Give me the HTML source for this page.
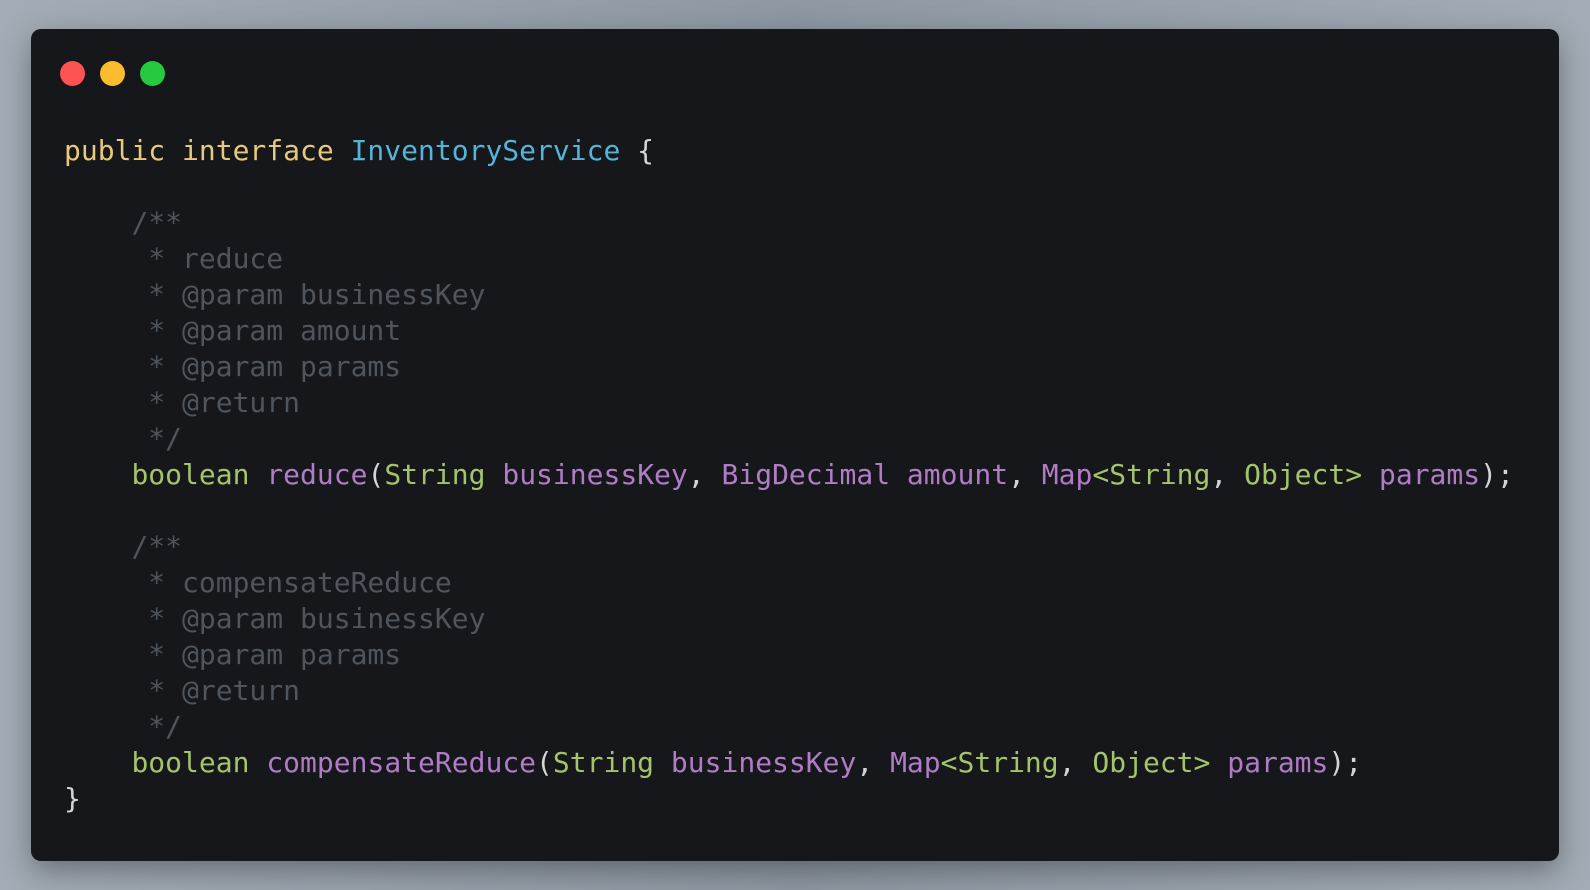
<!DOCTYPE html>
<html><head><meta charset="utf-8"><style>
html,body{margin:0;padding:0;width:1590px;height:890px;overflow:hidden;background:linear-gradient(90deg,#a3acb6,#8e98a2 50%,#a3acb6);}
.win{position:absolute;left:31px;top:29px;width:1528px;height:832px;background:#15171a;border-radius:10px;box-shadow:0 10px 30px rgba(0,0,0,.35);}
.d{position:absolute;top:32px;width:25px;height:25px;border-radius:50%;}
pre{position:absolute;left:33px;top:104px;margin:0;font-family:"DejaVu Sans Mono","Liberation Mono",monospace;font-size:28px;line-height:36px;color:#d4d4d4;}
.k{color:#e6c97a}.t{color:#56b4d8}.g{color:#a5c46a}.p{color:#b07cc6}.c{color:#4f555c}
</style></head><body>
<div class="win">
<div class="d" style="left:29px;background:#fd5353"></div>
<div class="d" style="left:69px;background:#fdbb2e"></div>
<div class="d" style="left:109px;background:#27c93f"></div>
<pre><span class="k">public interface</span> <span class="t">InventoryService</span> {

    <span class="c">/**
     * reduce
     * @param businessKey
     * @param amount
     * @param params
     * @return
     */</span>
    <span class="g">boolean</span> <span class="p">reduce</span>(<span class="g">String</span> <span class="p">businessKey</span>, <span class="p">BigDecimal amount</span>, <span class="p">Map</span><span class="g">&lt;String</span>, <span class="g">Object&gt;</span> <span class="p">params</span>);

    <span class="c">/**
     * compensateReduce
     * @param businessKey
     * @param params
     * @return
     */</span>
    <span class="g">boolean</span> <span class="p">compensateReduce</span>(<span class="g">String</span> <span class="p">businessKey</span>, <span class="p">Map</span><span class="g">&lt;String</span>, <span class="g">Object&gt;</span> <span class="p">params</span>);
}</pre>
</div>
</body></html>
